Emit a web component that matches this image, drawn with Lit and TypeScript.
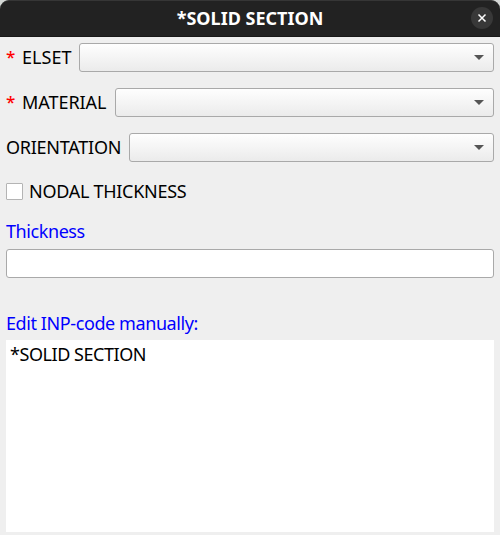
import { LitElement, html, css } from "lit";
import { customElement, property } from "lit/decorators.js";

@customElement("combo-row")
class ComboRow extends LitElement {
  @property() label = "";
  @property({ type: Boolean }) required = false;

  static styles = css`
    :host { display: flex; height: 29px; margin-bottom: 16px; align-items: stretch; }
    .star { width: 16px; color: #ff0000; line-height: 27px; flex: none; font-size: 17px; font-weight: 500; }
    .label { line-height: 29px; margin-right: 8px; white-space: nowrap; flex: none; width: var(--label-width); letter-spacing: var(--label-spacing); }
    .combo {
      flex: 1; box-sizing: border-box; border: 1px solid #a9a9a9; border-radius: 3px;
      background: linear-gradient(#fefefe, #ebebeb);
      display: flex; align-items: center; justify-content: flex-end; padding-right: 9px;
    }
    svg { display: block; }
  `;

  render() {
    return html`
      ${this.required ? html`<span class="star">*</span>` : ""}
      <span class="label">${this.label}</span>
      <div class="combo">
        <svg width="10" height="5" viewBox="0 0 10 5"><path d="M0 0H10L5 5Z" fill="#555"/></svg>
      </div>
    `;
  }
}

@customElement("app-root")
class AppRoot extends LitElement {
  static styles = css`
    :host {
      display: flex; flex-direction: column; width: 500px; height: 535px;
      background: #efefef; color: #000; font: 18px/29px "Noto Sans", sans-serif; overflow: hidden;
    }
    .frame { background: #d4d7d5; flex: none; }
    .titlebar {
      height: 37px; box-sizing: border-box; background: #222; color: #fff;
      border-top: 1px solid #363636; border-bottom: 1px solid #181818; border-radius: 9px 9px 0 0;
      display: grid; grid-template-columns: 29px 1fr 29px; align-items: center;
    }
    .title { font-weight: 700; text-align: center; letter-spacing: 0; white-space: nowrap; line-height: 35px; }
    .close { padding-bottom: 1px; }
    .close svg { display: block; }
    .content { flex: 1; display: flex; flex-direction: column; padding: 6px 6px 3px; }
    .elset { --label-width: 49px; --label-spacing: 0.05px; }
    .material { --label-width: 85px; --label-spacing: -0.05px; }
    .orientation { --label-width: 115px; --label-spacing: -0.25px; }
    .check { display: flex; align-items: center; gap: 6px; height: 29px; margin-bottom: 11px; margin-top: -1px; }
    .box { box-sizing: border-box; width: 17px; height: 17px; background: #fff; border: 1px solid #b4b4b4; border-radius: 1px; }
    .nodal { letter-spacing: -0.28px; }
    .blue { color: #0000ff; }
    .thickness { height: 29px; margin-bottom: 3px; letter-spacing: -0.42px; }
    .input { box-sizing: border-box; height: 29px; border: 1px solid #a9a9a9; border-radius: 3px; background: #fff; margin-bottom: 31px; }
    .edit { height: 29px; margin-bottom: 2px; letter-spacing: -0.41px; }
    .editor { flex: 1; background: #fff; padding-left: 4px; letter-spacing: -0.45px; }
  `;

  render() {
    return html`
      <div class="frame">
        <div class="titlebar">
          <span></span>
          <span class="title">*SOLID SECTION</span>
          <span class="close">
            <svg width="22" height="22" viewBox="0 0 22 22">
              <circle cx="11" cy="11" r="11" fill="#383838"/>
              <path d="M7.5 7.5L14.5 14.5M14.5 7.5L7.5 14.5" stroke="#fff" stroke-width="1.5"/>
            </svg>
          </span>
        </div>
      </div>
      <div class="content">
        <combo-row class="elset" label="ELSET" required></combo-row>
        <combo-row class="material" label="MATERIAL" required></combo-row>
        <combo-row class="orientation" label="ORIENTATION"></combo-row>
        <div class="check"><span class="box"></span><span class="nodal">NODAL THICKNESS</span></div>
        <div class="thickness blue"><span>Thickness</span></div>
        <div class="input"></div>
        <div class="edit blue"><span>Edit INP-code manually:</span></div>
        <div class="editor"><span>*SOLID SECTION</span></div>
      </div>
    `;
  }
}
